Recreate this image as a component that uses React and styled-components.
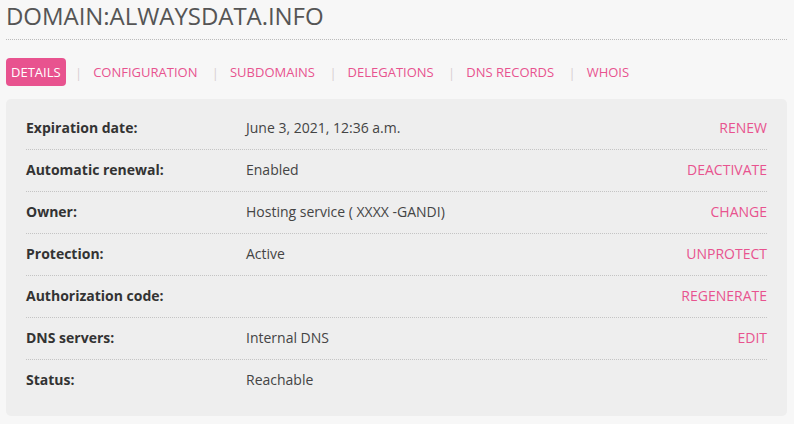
import React from "react";
import styled, { createGlobalStyle } from "styled-components";

const Global = createGlobalStyle`
  html, body { margin: 0; padding: 0; background: #f7f7f7; }
  body { font-family: "Open Sans", "Liberation Sans", sans-serif; color: #444; }
`;

const Page = styled.div`
  padding: 0 7px 0 6px;
`;

const Title = styled.h1`
  margin: 0;
  padding-top: 1px;
  font-size: 24px;
  line-height: 30px;
  font-weight: 400;
  color: #555;
  letter-spacing: -0.05px;
  padding-bottom: 8px;
  border-bottom: 1px dotted #bbb;
`;

const Tabs = styled.nav`
  display: flex;
  align-items: center;
  margin-top: 18px;
  height: 28px;
`;

const Tab = styled.a`
  display: block;
  padding: 1px 5px 0;
  height: 27px;
  line-height: 27px;
  font-size: 13px;
  text-transform: uppercase;
  border-radius: 4px;
  text-decoration: none;
  color: ${p => (p.$active ? "#fff" : "#e8538f")};
  background: ${p => (p.$active ? "#e8538f" : "transparent")};
`;

const Sep = styled.span`
  color: #d8cfd2;
  font-size: 13px;
  margin: 1px 6px 0 9.4px;
`;

const Panel = styled.section`
  margin-top: 13px;
  background: #eeeeee;
  border-radius: 5px;
  padding: 9px 20px 15px;
`;

const Row = styled.div`
  display: grid;
  grid-template-columns: 220px 1fr auto;
  align-items: center;
  padding: 10px 0 11px;
  line-height: 20px;
  font-size: 14px;
  border-bottom: 1px dotted #c4c4c4;
  &:last-child { border-bottom: none; }
`;

const Label = styled.div`
  font-weight: 700;
  color: #333;
`;

const Value = styled.div`
  color: #444;
`;

const Action = styled.a`
  color: #e8538f;
  text-transform: uppercase;
  text-decoration: none;
  text-align: right;
`;

const tabs = ["Details", "Configuration", "Subdomains", "Delegations", "DNS records", "Whois"];

const rows = [
  ["Expiration date:", "June 3, 2021, 12:36 a.m.", "Renew"],
  ["Automatic renewal:", "Enabled", "Deactivate"],
  ["Owner:", "Hosting service ( XXXX -GANDI)", "Change"],
  ["Protection:", "Active", "Unprotect"],
  ["Authorization code:", "", "Regenerate"],
  ["DNS servers:", "Internal DNS", "Edit"],
  ["Status:", "Reachable", ""],
];

export default function App() {
  return (
    <Page>
      <Global />
      <Title>DOMAIN:ALWAYSDATA.INFO</Title>
      <Tabs>
        {tabs.map((t, i) => (
          <React.Fragment key={t}>
            {i > 0 && <Sep>|</Sep>}
            <Tab $active={i === 0}>{t}</Tab>
          </React.Fragment>
        ))}
      </Tabs>
      <Panel>
        {rows.map(([l, v, a]) => (
          <Row key={l}>
            <Label>{l}</Label>
            <Value>{v}</Value>
            <Action>{a}</Action>
          </Row>
        ))}
      </Panel>
    </Page>
  );
}
